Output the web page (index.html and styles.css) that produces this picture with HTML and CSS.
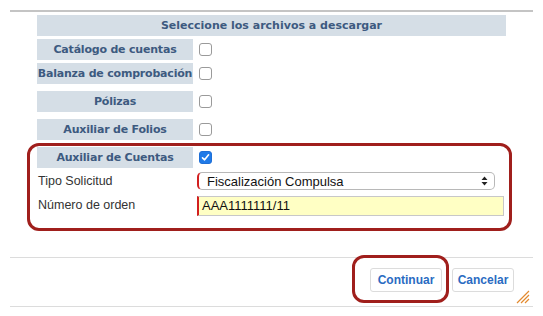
FILE: index.html
```html
<!DOCTYPE html>
<html lang="es">
<head>
  <meta charset="UTF-8">
  <title>Descarga de archivos</title>
  <link rel="stylesheet" href="styles.css">
</head>
<body>
  <div class="dialog">
    <div class="content">
      <div class="files">
        <div class="header">Seleccione los archivos a descargar</div>

        <div class="row tight">
          <div class="label">Catálogo de cuentas</div>
          <span class="check"></span>
        </div>
        <div class="row tight">
          <div class="label">Balanza de comprobación</div>
          <span class="check"></span>
        </div>
        <div class="row">
          <div class="label">Pólizas</div>
          <span class="check"></span>
        </div>
        <div class="row">
          <div class="label">Auxiliar de Folios</div>
          <span class="check"></span>
        </div>

        <div class="group">
          <div class="row first">
            <div class="label">Auxiliar de Cuentas</div>
            <span class="check checked">
              <svg width="9" height="9" viewBox="0 0 9 9"><path d="M1.5 4.8 L3.6 6.8 L7.6 1.8" fill="none" stroke="#fff" stroke-width="1.6" stroke-linecap="round" stroke-linejoin="round"/></svg>
            </span>
          </div>
          <div class="field">
            <span class="field-label">Tipo Solicitud</span>
            <div class="select">
              <span>Fiscalización Compulsa</span>
              <svg width="7" height="10" viewBox="0 0 7 10"><path d="M3.5 0.5 L6.5 4 L0.5 4 Z M3.5 9.5 L6.5 6 L0.5 6 Z" fill="#222"/></svg>
            </div>
          </div>
          <div class="field">
            <span class="field-label">Número de orden</span>
            <div class="input">AAA1111111/11</div>
          </div>
        </div>
      </div>
    </div>

    <div class="footer">
      <button class="btn continue">Continuar</button>
      <button class="btn cancel">Cancelar</button>
      <span class="mark"></span>
      <svg class="grip" width="14" height="14" viewBox="0 0 14 14">
        <path d="M13 1 L1 13 M13 5 L5 13 M13 9 L9 13" stroke="#e38a2f" stroke-width="1.2"/>
      </svg>
    </div>
  </div>
</body>
</html>
```

FILE: styles.css
```css
body {
  margin: 0;
  background: #fff;
  font-family: "Liberation Sans", Arial, sans-serif;
}
.dialog {
  width: 523px;
  margin-left: 10px;
  padding-top: 10px;
}
.content {
  border-top: 2px solid #d2d2d2;
  border-top-color: #c4c4c4;
  padding: 3px 0 0 27px;
  height: 247px;
  box-sizing: border-box;
}
.header {
  width: 469px;
  height: 21px;
  line-height: 21px;
  background: #d5dee6;
  color: #3d5a80;
  font-family: "DejaVu Sans", Verdana, sans-serif;
  font-weight: bold;
  font-size: 11px;
  text-align: center;
}
.row {
  display: flex;
  align-items: center;
  margin-top: 7px;
}
.row.tight {
  margin-top: 3px;
}
.row.first {
  margin-top: 0;
}
.label {
  width: 156px;
  height: 21px;
  line-height: 21px;
  background: #d5dee6;
  color: #3d5a80;
  font-family: "DejaVu Sans", Verdana, sans-serif;
  font-weight: bold;
  font-size: 11px;
  text-align: center;
  white-space: nowrap;
  letter-spacing: -0.2px;
}
.check {
  width: 11px;
  height: 11px;
  margin-left: 6px;
  border: 1px solid #9a9a9a;
  border-radius: 3px;
  background: #fff;
  display: flex;
  align-items: center;
  justify-content: center;
}
.check.checked {
  background: #1f7ae8;
  border-color: #1f6fd6;
}
.group {
  width: 485px;
  margin: 3px 0 0 -10px;
  border: 3px solid #a01f1c;
  border-radius: 12px;
  padding: 1px 0 12px 7px;
  box-sizing: border-box;
}
.field {
  display: flex;
  align-items: center;
  margin-top: 4px;
  font-size: 12.5px;
  color: #333;
}
.field-label {
  width: 159px;
  padding-left: 1px;
}
.select {
  width: 298px;
  height: 18px;
  box-sizing: border-box;
  border: 1px solid #b8b8b8;
  border-left: 2px solid #d21f1f;
  border-radius: 5px;
  padding: 0 6px 0 8px;
  display: flex;
  align-items: center;
  justify-content: space-between;
  font-size: 13px;
  color: #111;
}
.input {
  width: 307px;
  height: 20px;
  margin-top: 2px;
  box-sizing: border-box;
  border: 1px solid #c8c8c8;
  border-left: 2px solid #d21f1f;
  background: #ffffc4;
  padding-left: 3px;
  line-height: 18px;
  font-size: 13px;
  color: #111;
}
.footer {
  position: relative;
  height: 50px;
  border-top: 1px solid #dcdcdc;
  border-bottom: 1px solid #dcdcdc;
  display: flex;
  justify-content: flex-end;
  align-items: flex-start;
  gap: 10px;
  padding: 10px 19px 0 0;
  box-sizing: border-box;
}
.btn {
  height: 24px;
  padding: 0;
  border: 1px solid #dcdcdc;
  border-radius: 3px;
  background: #fff;
  color: #2a6bc2;
  font-family: "Liberation Sans", Arial, sans-serif;
  font-weight: bold;
  font-size: 12px;
}
.continue {
  width: 72px;
}
.cancel {
  width: 62px;
}
.mark {
  position: absolute;
  left: 342px;
  top: -3px;
  width: 97px;
  height: 48px;
  box-sizing: border-box;
  border: 3px solid #a01f1c;
  border-radius: 12px;
}
.grip {
  position: absolute;
  right: 3px;
  bottom: 2px;
}
```
